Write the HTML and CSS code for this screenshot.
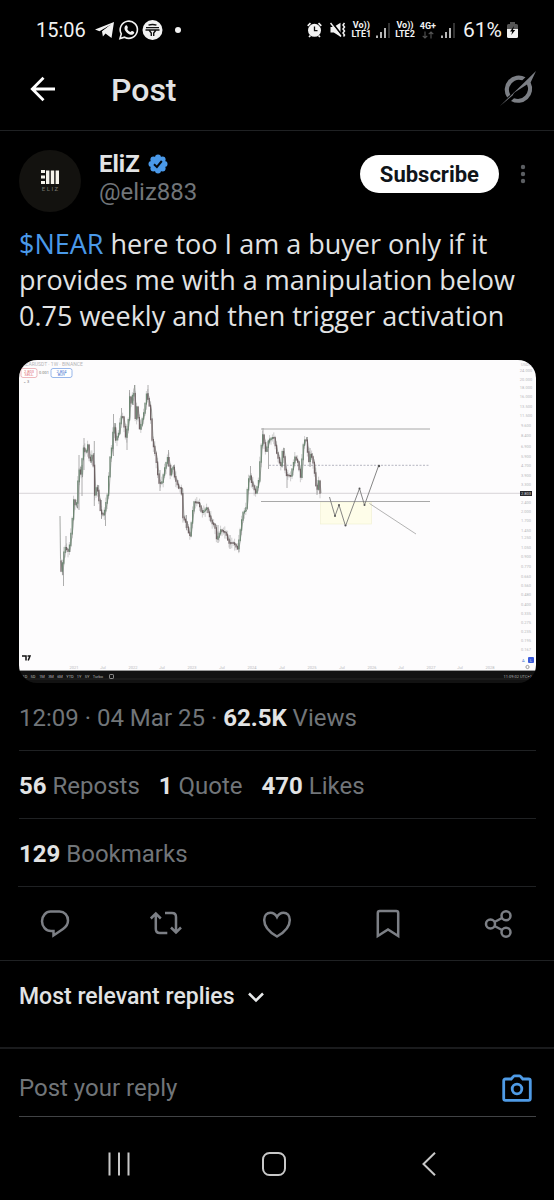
FILE: index.html
```html
<!DOCTYPE html>
<html lang="en">
<head>
<meta charset="utf-8">
<meta name="viewport" content="width=device-width, initial-scale=1">
<title>Post</title>
<link rel="stylesheet" href="styles.css">
</head>
<body>
<div class="statusbar">
  <span class="clock">15:06</span>
  <svg class="status-apps" width="68" height="22" viewBox="0 0 68 22" aria-hidden="true">
    <path d="M0 10.500 19 3l-2.500 16-6-4.500-2.600 3-.9-5L16 5.500 4.500 12.200Z" fill="#f2f2f2"/>
    <path d="M7 12.500 15.500 6 9.500 14Z" fill="#f2f2f2"/>
    <path d="M25 19.500l1.300-4.600a8.600 8.600 0 1 1 3.300 3.300Z" fill="none" stroke="#f2f2f2" stroke-width="1.600"/>
    <path d="M30 7.200c1-1.300 2-1 2.500.4.600 1.500.3 1.600-.3 2.500.8 1.600 1.900 2.500 3.300 3 1-1.200 1.300-1.500 2.400-.8 1.500.8 1.700 1 1 2.200-1.400 2-4 1.300-6-.1-2.300-1.700-4.400-4.700-2.900-7.200Z" fill="#f2f2f2"/>
    <circle cx="57.500" cy="11" r="10" fill="#f2f2f2"/>
    <path d="M53.500 6.200q4-1.400 8 0M51 8.600h13M50.500 11h14M54 11l2.300 3v3M61 11l-2.300 3v3" fill="none" stroke="#111" stroke-width="1.400"/>
  </svg>
  <span class="dot"></span>
  <div class="status-right">
    <svg class="alarm" width="15" height="16" viewBox="0 0 15 16" aria-hidden="true">
      <path d="M.7 3.800 3.500 1.200M14.300 3.800 11.500 1.200M3.500 13.500 2 15M11.500 13.500 13 15" stroke="#f2f2f2" stroke-width="1.700"/>
      <circle cx="7.500" cy="8.300" r="6.500" fill="#f2f2f2"/>
      <path d="M7.500 4.500v4.200h3" fill="none" stroke="#111" stroke-width="1.300"/>
    </svg>
    <svg width="16" height="16" viewBox="0 0 16 16" aria-hidden="true">
      <path d="M.5 5h3.300L10.500.8v14L3.800 10.500H.5Z" fill="#f2f2f2"/>
      <path d="M1.500 0 12.500 14" stroke="#000" stroke-width="2"/>
      <path d="M.5 1 11 14.500" stroke="#f2f2f2" stroke-width="1.500"/>
      <path d="M14.500 1l-1.500 2 1.500 2-1.500 2 1.500 2-1.500 2 1.500 2-1 1.500" fill="none" stroke="#f2f2f2" stroke-width="1.500"/>
    </svg>
    <span class="carrier"><b>Vo))</b><b>LTE1</b></span>
    <svg width="14" height="15" viewBox="0 0 14 15" aria-hidden="true"><path d="M1 15v-2.500M5 15V9M9 15V5" stroke="#f2f2f2" stroke-width="1.500"/><path d="M13 15V0" stroke="#444" stroke-width="1.500"/></svg>
    <span class="carrier"><b>Vo))</b><b>LTE2</b></span>
    <span class="carrier"><b>4G+</b><svg width="12" height="8" viewBox="0 0 12 8" aria-hidden="true"><path d="M3 .5v6.500M.7 4.800 3 7l2.300-2.200M9 7.500V1M6.700 3.200 9 1l2.300 2.200" fill="none" stroke="#555" stroke-width="1.100"/></svg></span>
    <svg width="14" height="15" viewBox="0 0 14 15" aria-hidden="true"><path d="M1 15v-2.500M5 15V9M9 15V5" stroke="#f2f2f2" stroke-width="1.500"/><path d="M13 15V0" stroke="#444" stroke-width="1.500"/></svg>
    <span class="percent">61%</span>
    <svg class="battery" width="11" height="16" viewBox="0 0 11 16" aria-hidden="true">
      <path d="M3 0h5v2h1.500Q11 2 11 3.500V8H0V3.500Q0 2 1.500 2H3Z" fill="#555"/>
      <path d="M0 7h11v7.500Q11 16 9.500 16h-8Q0 16 0 14.500Z" fill="#f2f2f2"/>
      <path d="M7 4 3 9.500h2.200L4.300 13 8.200 8H6Z" fill="#000"/>
    </svg>
  </div>
</div>

<header class="topbar">
  <button class="icon-button" type="button" aria-label="Back">
    <svg width="26" height="26" viewBox="0 0 26 26"><path d="M25 13H3M13.500 1.800 2.300 13l11.200 11.200" fill="none" stroke="#fff" stroke-width="2.800"/></svg>
  </button>
  <h1 class="title">Post</h1>
  <button class="icon-button" type="button" aria-label="Grok">
    <svg width="36" height="36" viewBox="0 0 36 36" fill="#7c7f85">
      <path d="M25.500 6.300A14 14 0 0 0 7.200 26.500L10.300 23.800A10.200 10.200 0 0 1 22.300 9.200Z"/>
      <path d="M11 29.900A14 14 0 0 0 30.600 11.500L36 0 13 22.500 27 13.500A10.200 10.200 0 0 1 14 27.200Z"/>
      <path d="M0 35 15 20.500 12.500 24.500 9 27.500Z"/>
    </svg>
  </button>
</header>

<main>
  <article class="post">
    <div class="author">
      <svg class="avatar" width="62" height="62" viewBox="0 0 62 62" role="img" aria-label="EliZ avatar">
        <circle cx="31" cy="31" r="31" fill="#13120f"/>
        <path d="M22 21.500h4M22 27h4M22 32.500h4" stroke="#f5f3ea" stroke-width="3"/>
        <path d="M28.700 20.500V34M33.500 20.500V34M38.300 20.500V34" stroke="#f5f3ea" stroke-width="3.400"/>
        <text class="avatar-text" x="31" y="40.500" text-anchor="middle">E L I Z</text>
      </svg>
      <div class="identity">
        <div class="name-row">
          <span class="name">EliZ</span>
          <svg width="20" height="20" viewBox="0 0 20 20" role="img" aria-label="Verified">
            <g fill="#4a99e9"><circle cx="10" cy="10" r="7.500"/><circle cx="10" cy="3.500" r="3"/><circle cx="14.600" cy="5.400" r="3"/><circle cx="16.500" cy="10" r="3"/><circle cx="14.600" cy="14.600" r="3"/><circle cx="10" cy="16.500" r="3"/><circle cx="5.400" cy="14.600" r="3"/><circle cx="3.500" cy="10" r="3"/><circle cx="5.400" cy="5.400" r="3"/></g>
            <path d="M6 10.300 8.900 13 13.800 7" fill="none" stroke="#05080c" stroke-width="2"/>
          </svg>
        </div>
        <span class="handle">@eliz883</span>
      </div>
      <button class="subscribe" type="button">Subscribe</button>
      <button class="icon-button more" type="button" aria-label="More">
        <svg width="6" height="20" viewBox="0 0 6 20" fill="#5b5e62"><circle cx="3" cy="3" r="2.200"/><circle cx="3" cy="10" r="2.200"/><circle cx="3" cy="17" r="2.200"/></svg>
      </button>
    </div>

    <p class="body"><a class="cashtag" href="#near">$NEAR</a> here too I am a buyer only if it provides me with a manipulation below 0.75 weekly and then trigger activation</p>

    <svg class="media" viewBox="0 0 517 323" role="img" aria-label="Weekly price chart">
      <rect width="517" height="323" fill="#121212"/>
      <rect width="517" height="311" fill="#fdfcfd"/>
      <path d="M0 310.500h517" stroke="#999"/>
      <path d="M0 319h517" stroke="#242424"/>
      <path d="M0 133.300h501" stroke="#d2d0d2" stroke-width=".9"/>
      <rect x="301.500" y="142" width="51" height="22" fill="#fefde9" stroke="#f1f0d5" stroke-width=".7"/>
      <path d="M242 69h169M242 141.500h169" stroke="#a8a8a8" stroke-width="1"/>
      <path d="M250 105.300h160" stroke="#a5a5b2" stroke-width=".8" stroke-dasharray="2 1.500"/>
      <g id="candles"></g>
      <path d="M310.500 137l5.500 19 4-11 6.500 21 14-37.500 5 16.500 14-39" fill="none" stroke="#777" stroke-width=".9"/>
      <path d="M397 174 350.500 143.500" stroke="#aaa" stroke-width=".9"/>
      <g fill="#555"><circle cx="316" cy="156" r="1"/><circle cx="320" cy="145" r="1"/><circle cx="326.500" cy="165.500" r="1"/><circle cx="340.500" cy="128.500" r="1"/><circle cx="345.500" cy="145" r="1"/><circle cx="360" cy="106" r="1.200"/></g>
      <text class="chart-text" x="3" y="5.500">NEARUSDT · 1W · BINANCE</text>
      <rect x="2" y="8.500" width="16" height="9" rx="2" fill="#fff" stroke="#e9a5ab" stroke-width=".8"/>
      <rect x="32" y="8.500" width="21" height="9" rx="2" fill="#fff" stroke="#7ea5e4" stroke-width=".8"/>
      <g text-anchor="middle">
        <text class="trade sell" x="10" y="12.500">2.803</text><text class="trade sell" x="10" y="16.300">SELL</text>
        <text class="trade buy" x="42.500" y="12.500">2.804</text><text class="trade buy" x="42.500" y="16.300">BUY</text>
        <text class="trade" x="25" y="14">0.001</text>
      </g>
      <text class="trade" x="4" y="23">⌄ 3</text>
      <path d="M3 296h4v4.500M8.500 296h2.500l-1.800 4.500" fill="none" stroke="#111" stroke-width="1.500"/>
      <g id="axis" text-anchor="middle"></g>
      <rect x="501" y="131" width="12" height="5" fill="#26262b"/>
      <text class="chart-tag" x="507" y="135" text-anchor="middle">2.803</text>
      <rect x="509" y="297" width="6" height="6" rx="1" fill="#3b5bdb"/>
      <text class="chart-tag" x="512" y="301.500" text-anchor="middle">L</text>
      <text class="trade buy" x="503" y="301.500">A</text>
      <circle cx="508.500" cy="307" r="1.600" fill="none" stroke="#888" stroke-width=".8"/>
      <g id="ranges" text-anchor="middle"></g>
      <rect x="90.500" y="314.500" width="4" height="4" rx=".7" fill="none" stroke="#aaa" stroke-width=".8"/>
      <text class="range" x="513" y="318" text-anchor="end">11:09:02 UTC+1</text>
    </svg>

    <p class="meta">12:09 · 04 Mar 25 · <strong>62.5K</strong> Views</p>
    <div class="stats"><span><strong>56</strong> Reposts</span><span><strong>1</strong> Quote</span><span><strong>470</strong> Likes</span></div>
    <div class="stats"><span><strong>129</strong> Bookmarks</span></div>
  </article>

  <div class="actions">
    <button class="icon-button" type="button" aria-label="Reply">
      <svg width="30" height="30" viewBox="0 0 30 30"><path d="M10.500 2.500h9A8.700 8.700 0 0 1 28 11.500c0 4-2.200 6.500-5 8.500L13.500 26.500V22H11C6 22 2 17.500 2 12.200S6 2.500 10.500 2.500Z"/></svg>
    </button>
    <button class="icon-button" type="button" aria-label="Repost">
      <svg width="34" height="30" viewBox="0 0 34 30"><path d="M1.800 9.500 6.800 4.500l5 5M6.800 5v15q0 4 4 4h7.500M16 4h7q4 0 4 4v15M22 18.500l5 5 5-5"/></svg>
    </button>
    <button class="icon-button" type="button" aria-label="Like">
      <svg width="30" height="30" viewBox="0 0 30 30"><path d="M15 27.500C7.500 23.300 2.200 17.500 2.200 11 2.200 6.500 5 3.700 8.500 3.700c2.800 0 5 1.500 6.500 4.300 1.500-2.800 3.700-4.300 6.500-4.300 3.500 0 6.300 2.800 6.300 7.300 0 6.500-5.300 12.300-12.800 16.500Z"/></svg>
    </button>
    <button class="icon-button" type="button" aria-label="Bookmark">
      <svg width="26" height="30" viewBox="0 0 26 30"><path d="M2.800 27V4q0-2 2-2h16.400q2 0 2 2v23L13 20.500Z"/></svg>
    </button>
    <button class="icon-button" type="button" aria-label="Share">
      <svg width="30" height="30" viewBox="0 0 30 30"><circle cx="6.500" cy="15" r="4.500"/><circle cx="22" cy="6.800" r="4.500"/><circle cx="22" cy="23.200" r="4.500"/><path d="M10.500 13 18 9M10.500 17l7.500 4"/></svg>
    </button>
  </div>

  <button class="sort" type="button">Most relevant replies
    <svg width="18" height="12" viewBox="0 0 18 12"><path d="M2 2.500l7 7 7-7" fill="none" stroke="#e7e9ea" stroke-width="2.500"/></svg>
  </button>
</main>

<form class="composer">
  <div class="composer-line">
    <input class="reply" type="text" placeholder="Post your reply" aria-label="Post your reply">
    <button class="icon-button" type="button" aria-label="Add photo">
      <svg width="30" height="30" viewBox="0 0 30 30" fill="none" stroke="#4f9be6" stroke-width="2.800"><path d="M3.500 6h5.700l2.300-2.600q.5-.6 1.200-.6h4.600q.7 0 1.200.6L20.800 6h5.700q1.800 0 1.800 1.800v17.700q0 1.800-1.800 1.800h-23q-1.800 0-1.800-1.800V7.800Q1.700 6 3.500 6Z"/><circle cx="15" cy="16" r="4.800"/></svg>
    </button>
  </div>
</form>

<nav class="navbar" aria-label="System">
  <button class="icon-button" type="button" aria-label="Recents"><svg width="24" height="24" viewBox="0 0 24 24"><path d="M2.500.5v23M12 .5v23M21.500.5v23"/></svg></button>
  <button class="icon-button" type="button" aria-label="Home"><svg width="24" height="24" viewBox="0 0 24 24"><rect x="1" y="1" width="22" height="22" rx="6.500"/></svg></button>
  <button class="icon-button" type="button" aria-label="Back"><svg width="24" height="24" viewBox="0 0 24 24"><path d="M18 .8 6.500 12 18 23.200"/></svg></button>
</nav>
<script src="chart.js"></script>
</body>
</html>
```

FILE: styles.css
```css
* { box-sizing: border-box; }

body {
  margin: 0;
  min-height: 100vh;
  display: flex;
  flex-direction: column;
  background: #000;
  color: #e2e3e4;
  font-family: Roboto, "Noto Sans", sans-serif;
}

button {
  padding: 0;
  border: 0;
  background: none;
  color: inherit;
  font: inherit;
  cursor: pointer;
}

svg { display: block; flex: none; }

.icon-button { display: flex; }

.statusbar {
  height: 60px;
  padding: 0 36px;
  display: flex;
  align-items: center;
  color: #f2f2f2;
}
.clock { font-size: 20px; }
.status-apps { margin-left: 9px; }
.dot {
  width: 6px;
  height: 6px;
  margin-left: 12px;
  border-radius: 50%;
  background: #f2f2f2;
}
.status-right {
  margin-left: auto;
  display: flex;
  align-items: center;
  gap: 5px;
}
.alarm { margin-right: 3px; }
.carrier {
  display: flex;
  flex-direction: column;
  align-items: center;
  font-size: 9px;
  line-height: 9px;
}
.carrier b { font-weight: 700; }
.percent { margin-left: 3px; font-size: 21px; }

.topbar {
  height: 71px;
  padding: 0 18px 12px 30px;
  display: flex;
  align-items: center;
  border-bottom: 1px solid #1f2123;
}
.title {
  flex: 1;
  margin: 2px 0 0 55px;
  font-size: 32px;
  line-height: 36px;
  font-weight: 500;
}

.post { padding: 19px 18px 0 19px; }

.author { display: flex; align-items: flex-start; }
.avatar-text { fill: #77756e; font-size: 6px; }
.identity {
  flex: 1;
  margin-left: 18px;
  display: flex;
  flex-direction: column;
}
.name-row { display: flex; align-items: center; gap: 8px; }
.name { font-size: 24px; line-height: 28px; font-weight: 700; }
.handle { font-size: 24px; line-height: 28px; color: #717579; }
.subscribe {
  height: 38px;
  margin: 5px 0 0;
  padding: 0 20px;
  border-radius: 19px;
  background: #fff;
  color: #0f1419;
  font-size: 22px;
  font-weight: 700;
}
.more { margin: 14px 10px 0 21px; }

.body {
  margin: 14px 0 26px;
  font-family: "Open Sans", Roboto, sans-serif;
  font-size: 27px;
  line-height: 36px;
}
.cashtag { color: #4a99e9; text-decoration: none; }

.media { width: 100%; height: auto; border-radius: 18px; }
.chart-text { fill: #b5b5b8; font-size: 5px; }
.trade { fill: #777; font-size: 4px; }
.sell { fill: #dc6670; }
.buy { fill: #3d72cf; }
.chart-tag { fill: #ddd; font-size: 4px; }
.axis-text { fill: #b8b8bc; font-size: 4px; }
.range { fill: #b4b4b4; font-size: 4px; }

.meta, .stats {
  margin: 0;
  color: #717579;
  font-size: 24px;
  line-height: 32px;
}
.meta { padding: 19px 0 16px; }
.stats {
  padding: 19px 0 16px;
  display: flex;
  gap: 19px;
  border-top: 1px solid #1f2123;
}
strong { color: #e2e3e4; font-weight: 700; }

.actions {
  height: 75px;
  padding-top: 2px;
  display: grid;
  grid-template-columns: repeat(5, 1fr);
  place-items: center;
  position: relative;
  border-bottom: 1px solid #1f2123;
}
.actions::before {
  content: "";
  position: absolute;
  inset: 0 18px auto;
  height: 1px;
  background: #1f2123;
}
.actions svg { fill: none; stroke: #7c7f85; stroke-width: 2.500; }

.sort {
  margin: 20px 19px 34px;
  display: flex;
  align-items: center;
  gap: 12px;
  font-size: 23px;
  line-height: 32px;
  font-weight: 500;
}

.composer { padding: 0 18px 0 19px; border-top: 2px solid #1a1b1d; }
.composer-line {
  height: 68px;
  padding: 11px 4px 0 0;
  display: flex;
  align-items: center;
  border-bottom: 1px solid #414345;
}
.reply {
  flex: 1;
  min-width: 0;
  padding: 0;
  border: 0;
  outline: 0;
  background: none;
  color: #e2e3e4;
  font: inherit;
  font-size: 24px;
  line-height: 32px;
}
.reply::placeholder { color: #717579; opacity: 1; }

.navbar {
  flex: 1;
  min-height: 82px;
  padding: 10px 47px 0 41px;
  display: grid;
  grid-template-columns: repeat(3, 1fr);
  place-items: center;
}
.navbar svg { fill: none; stroke: #c8c8c8; stroke-width: 2; }
```

FILE: chart.js
```javascript
const NS = "http://www.w3.org/2000/svg";

// Turning points of the price line, as x, y pairs in chart units.
const turns = [
  [41,156],[41.5,198],[44,215],[45,200],[47,187],[51,192],[54,167],[56,140],[58.5,148],[60,123],
  [62,107],[63.5,117],[65,87],[68,93],[70,85],[72,103],[75,93],[77,135],[79,125],[83,153],
  [86,155],[90,133],[92,100],[94,87],[96,63],[98,80],[101,73],[103,57],[105,57],[108,78],
  [111,57],[112,37],[114,45],[115.7,25],[117.7,60],[119,47],[122,70],[126,53],[129,33],[132.5,50],
  [134,78],[138,97],[141,123],[144,123],[147,108],[150,97],[152.5,115],[155,105],[157,118],[161,128],
  [163.5,128],[165,157],[168,162],[172,177],[176,142],[181,143],[184,153],[189,148],[194,163],[197,165],
  [199,180],[203,170],[208,173],[211,183],[216,183],[220,189],[223,167],[225,153],[228,150],[229,140],
  [230,123],[232,115],[234,123],[238,133],[241,120],[243,90],[245,75],[248,92],[251,80],[256,77],
  [259,93],[263,107],[265,88],[268,115],[273,116],[277,97],[280,102],[283,118],[285,87],[288,77],
  [291,102],[293,93],[296,105],[298,125],[300,130],[301,121],[302,133]
];

// Long wicks: x, top, bottom.
const wicks = [
  [44.500,200,226],[47,176,190],[60,95,150],[63,105,136],[65,78,110],[75.300,81,146],[82.500,140,159],
  [86.500,150,166],[94.500,54,96],[102.500,48,60],[108,66,90],[110.500,30,60],[129,25,40],[141,110,131],
  [149.500,90,100],[167.500,155,170],[199,165,183],[211,175,189],[220,183,192],[231.500,106,120],
  [244,68,85],[249.500,80,109],[268,112,128],[291,88,107],[298,120,135]
];

function add(parent, tag, attrs, text) {
  const node = document.createElementNS(NS, tag);
  for (const key in attrs) node.setAttribute(key, attrs[key]);
  if (text) node.textContent = text;
  parent.appendChild(node);
}

function priceAt(x) {
  for (let i = 1; i < turns.length; i++) {
    const [x0, y0] = turns[i - 1];
    const [x1, y1] = turns[i];
    if (x <= x1) return y0 + (y1 - y0) * (x - x0) / (x1 - x0);
  }
  return turns[turns.length - 1][1];
}

const candles = document.getElementById("candles");
add(candles, "path", {
  d: "M" + turns.map(p => p.join(" ")).join("L"),
  fill: "none", stroke: "#8b908b", "stroke-width": 0.8
});
for (const [x, top, bottom] of wicks) {
  add(candles, "path", { d: `M${x} ${top}V${bottom}`, stroke: "#999", "stroke-width": 0.8 });
}
let step = 0;
for (let x = 42; x < 302; x += 1.4) {
  const open = priceAt(x);
  const close = priceAt(x + 1.4);
  const top = Math.min(open, close) - 0.8;
  const bottom = Math.max(open, close) + 0.8;
  const up = 0.5 + (step * 7) % 5;
  const down = 0.5 + (step * 11) % 7 * 0.8;
  const body = close < open ? "#6a8570" : "#6c5e60";
  add(candles, "path", { d: `M${x} ${top - up}V${bottom + down}`, stroke: "#888", "stroke-width": 0.4 });
  add(candles, "path", { d: `M${x} ${top}V${bottom}`, stroke: body, "stroke-width": 1.1 });
  step++;
}

const axis = document.getElementById("axis");
const prices = [
  ["USDT",5],["24.000",11],["20.000",20],["18.000",28],["16.000",37],["13.500",47],["11.500",56],["9.600",66],
  ["8.400",76],["6.900",87],["5.900",97],["4.700",106],["3.900",116],["3.300",125],["2.400",143],["2.000",152],
  ["1.700",161],["1.450",171],["1.250",178],["1.050",188],["0.900",197],["0.770",207],["0.660",217],["0.560",226],
  ["0.480",235],["0.400",245],["0.335",254],["0.275",263],["0.235",272],["0.195",281],["0.167",290]
];
for (const [label, y] of prices) add(axis, "text", { x: 507, y: y + 1, class: "axis-text" }, label);

const dates = [
  ["2021",55],["Jul",84],["2022",114],["Jul",143],["2023",173],["Jul",203],["2024",233],["Jul",263],
  ["2025",293],["Jul",323],["2026",353],["Jul",382],["2027",412],["Jul",441],["2028",471]
];
for (const [label, x] of dates) add(axis, "text", { x, y: 308.5, class: "axis-text" }, label);

const ranges = [
  ["1D",6],["5D",14],["1M",23],["3M",32],["6M",41],["YTD",51],["1Y",60],["5Y",68],["Turbo",79]
];
const rangeRow = document.getElementById("ranges");
for (const [label, x] of ranges) add(rangeRow, "text", { x, y: 318, class: "range" }, label);
```
